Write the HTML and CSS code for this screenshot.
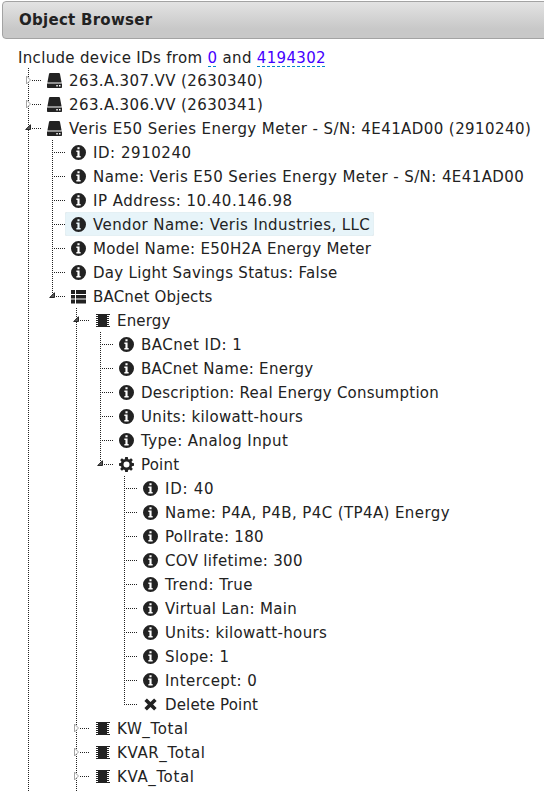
FILE: index.html
```html
<!DOCTYPE html>
<html lang="en">
<head>
<meta charset="utf-8">
<title>Object Browser</title>
<link rel="stylesheet" href="styles.css">
</head>
<body>
<svg class="defs" aria-hidden="true">
  <symbol id="drive" viewBox="0 0 15 15"><path d="M3 0h9q.8 0 1 .9L14.600 9.500H.4L2 .9Q2.200 0 3 0zM0 10.500h15v3.700q0 .8-.8.800H.8q-.8 0-.8-.8zM9.300 12v1.500h1.500V12zm2.700 0v1.500h1.500V12z" fill-rule="evenodd"/></symbol>
  <symbol id="info" viewBox="0 0 14 14"><path d="M7 0a7 7 0 1 1 0 14A7 7 0 0 1 7 0zM6 2v2h2V2zM5 5.200v1.300h1v3.800H5v1.300h4v-1.300H8V5.200z" fill-rule="evenodd"/></symbol>
  <symbol id="list" viewBox="0 0 15 15"><path d="M0 1h4v4H0zM5 1h10v4H5zM0 6h4v3.500H0zM5 6h10v3.500H5zM0 10.500h4v4H0zM5 10.500h10v4H5z"/></symbol>
  <symbol id="chip" viewBox="0 0 15 15"><path d="M3 1h9v13H3zM1 1h2v1H1zM1 3h2v1H1zM1 5h2v1H1zM1 7h2v1H1zM1 9h2v1H1zM1 11h2v1H1zM1 13h2v1H1zM12 1h3v1h-3zM12 3h2v1h-2zM12 5h2v1h-2zM12 7h2v1h-2zM12 9h2v1h-2zM12 11h2v1h-2zM12 13h3v1h-3z"/></symbol>
  <symbol id="gear" viewBox="0 0 14 14"><path d="M5.800 0h2.400l.4 2 1 .4L11.300 1.200 12.900 2.800 11.700 4.400l.4 1 1.900.4v2.400l-1.900.4-.4 1 1.200 1.600-1.600 1.600-1.700-1.100-1 .4-.4 1.900H5.800l-.4-1.900-1-.4-1.700 1.100-1.600-1.600 1.200-1.600-.4-1L0 8.200V5.800l1.900-.4.4-1L1.100 2.800l1.600-1.600 1.700 1.200 1-.4zM7 4.200a2.800 2.800 0 1 0 0 5.600 2.800 2.800 0 0 0 0-5.600z" fill-rule="evenodd"/></symbol>
  <symbol id="cross" viewBox="0 0 15 15"><path d="M3.900 1.500 7.500 5l3.600-3.500 2.500 2.500L10.100 7.600l3.500 3.500-2.500 2.500-3.600-3.500-3.600 3.500-2.500-2.500 3.500-3.500L1.400 4z"/></symbol>
  <symbol id="right" viewBox="0 0 6 10"><path d="M.5 1v8L4.500 5z" fill="#fff" stroke="#a6a6a6"/></symbol>
  <symbol id="down" viewBox="0 0 6 6"><path d="M5.500.7v4.800H.7z" fill="#595959" stroke="#262626"/></symbol>
</svg>
<header class="titlebar">Object Browser</header>
<main class="browser">
  <p class="range">Include device IDs from <a>0</a> and <a>4194302</a></p>
  <ul class="tree">
    <li class="parent"><svg class="arrow closed"><use href="#right"/></svg><span class="row s40"><svg><use href="#drive"/></svg>263.A.307.VV (2630340)</span></li>
    <li class="parent"><svg class="arrow closed"><use href="#right"/></svg><span class="row s40"><svg><use href="#drive"/></svg>263.A.306.VV (2630341)</span></li>
    <li class="parent more"><svg class="arrow"><use href="#down"/></svg><span class="row s42"><svg><use href="#drive"/></svg>Veris E50 Series Energy Meter - S/N: 4E41AD00 (2910240)</span>
      <ul>
        <li><span class="row s55"><svg><use href="#info"/></svg>ID: 2910240</span></li>
        <li><span class="row s42"><svg><use href="#info"/></svg>Name: Veris E50 Series Energy Meter - S/N: 4E41AD00</span></li>
        <li><span class="row s48"><svg><use href="#info"/></svg>IP Address: 10.40.146.98</span></li>
        <li><span class="row s40 hovered"><svg><use href="#info"/></svg>Vendor Name: Veris Industries, LLC</span></li>
        <li><span class="row s30"><svg><use href="#info"/></svg>Model Name: E50H2A Energy Meter</span></li>
        <li><span class="row s30"><svg><use href="#info"/></svg>Day Light Savings Status: False</span></li>
        <li class="parent"><svg class="arrow"><use href="#down"/></svg><span class="row s20"><svg><use href="#list"/></svg>BACnet Objects</span>
          <ul>
            <li class="parent"><svg class="arrow"><use href="#down"/></svg><span class="row s15"><svg><use href="#chip"/></svg>Energy</span>
              <ul>
                <li><span class="row s48"><svg><use href="#info"/></svg>BACnet ID: 1</span></li>
                <li><span class="row s30"><svg><use href="#info"/></svg>BACnet Name: Energy</span></li>
                <li><span class="row s25"><svg><use href="#info"/></svg>Description: Real Energy Consumption</span></li>
                <li><span class="row s33"><svg><use href="#info"/></svg>Units: kilowatt-hours</span></li>
                <li><span class="row s42"><svg><use href="#info"/></svg>Type: Analog Input</span></li>
                <li class="parent"><svg class="arrow"><use href="#down"/></svg><span class="row s20"><svg><use href="#gear"/></svg>Point</span>
                  <ul>
                    <li><span class="row s75"><svg><use href="#info"/></svg>ID: 40</span></li>
                    <li><span class="row s40"><svg><use href="#info"/></svg>Name: P4A, P4B, P4C (TP4A) Energy</span></li>
                    <li><span class="row s30"><svg><use href="#info"/></svg>Pollrate: 180</span></li>
                    <li><span class="row s33"><svg><use href="#info"/></svg>COV lifetime: 300</span></li>
                    <li><span class="row s48"><svg><use href="#info"/></svg>Trend: True</span></li>
                    <li><span class="row s33"><svg><use href="#info"/></svg>Virtual Lan: Main</span></li>
                    <li><span class="row s33"><svg><use href="#info"/></svg>Units: kilowatt-hours</span></li>
                    <li><span class="row s42"><svg><use href="#info"/></svg>Slope: 1</span></li>
                    <li><span class="row s42"><svg><use href="#info"/></svg>Intercept: 0</span></li>
                    <li><span class="row s15"><svg><use href="#cross"/></svg>Delete Point</span></li>
                  </ul>
                </li>
              </ul>
            </li>
            <li class="parent"><svg class="arrow closed"><use href="#right"/></svg><span class="row s62"><svg><use href="#chip"/></svg>KW_Total</span></li>
            <li class="parent"><svg class="arrow closed"><use href="#right"/></svg><span class="row s62"><svg><use href="#chip"/></svg>KVAR_Total</span></li>
            <li class="parent more last"><svg class="arrow closed"><use href="#right"/></svg><span class="row s62"><svg><use href="#chip"/></svg>KVA_Total</span></li>
          </ul>
        </li>
      </ul>
    </li>
  </ul>
</main>
</body>
</html>
```

FILE: styles.css
```css
* { box-sizing: border-box; }
html { overflow: hidden; background: #fff; }
body {
  margin: 0;
  height: 792px;
  overflow: hidden;
  color: #222;
  font: 15px/24px "DejaVu Sans", sans-serif;
}
.defs { position: absolute; width: 0; height: 0; }
.titlebar {
  margin: 1px 0 0 2px;
  width: 560px;
  height: 38px;
  padding: 0 15px 0 16px;
  border: 1px solid #a3a3a3;
  border-radius: 4px;
  background: linear-gradient(#e3e3e3, #c8c8c8 75%);
  font-weight: bold;
  letter-spacing: .27px;
  line-height: 36px;
}
.browser { padding-left: 17px; white-space: nowrap; }
.range { margin: 7px 0 0 1px; height: 22px; letter-spacing: .33px; }
.range a {
  color: #40f;
  background: repeating-linear-gradient(90deg, #08c 0 3px, transparent 3px 5px) left bottom / 100% 1px no-repeat;
}
ul { list-style: none; margin: 0; padding: 0; }
li { position: relative; padding-left: 24px; }
.last { padding-bottom: 8px; }
/* vertical guide */
li::before {
  content: "";
  position: absolute;
  left: 11px;
  top: 0;
  bottom: 0;
  width: 1px;
  background: repeating-linear-gradient(#222 0 1px, transparent 1px 2px);
}
li:last-child:not(.more)::before { bottom: auto; height: 13px; }
/* horizontal guide */
li::after {
  content: "";
  position: absolute;
  left: 13px;
  top: 12px;
  width: 11px;
  height: 1px;
  background: repeating-linear-gradient(90deg, #222 0 1px, transparent 1px 2px);
}
.parent::after { left: 15px; width: 9px; }
.arrow { position: absolute; left: 8px; top: 8px; width: 6px; height: 6px; }
.arrow.closed { left: 9px; top: 7px; height: 10px; }
.row {
  display: inline-flex;
  align-items: flex-start;
  height: 24px;
  line-height: 26px;
  padding: 0 4px 0 6px;
  vertical-align: top;
}
.row svg { width: 15px; height: 15px; margin: 5px 7px 0 0; fill: #222; }
.hovered { background: #e7f4f9; border-radius: 2px; box-shadow: inset 0 0 1px #ccc; }
/* tracking steps */
.s15 { letter-spacing: .15px; }
.s20 { letter-spacing: .2px; }
.s25 { letter-spacing: .25px; }
.s30 { letter-spacing: .3px; }
.s33 { letter-spacing: .33px; }
.s40 { letter-spacing: .4px; }
.s42 { letter-spacing: .42px; }
.s48 { letter-spacing: .48px; }
.s55 { letter-spacing: .55px; }
.s62 { letter-spacing: .62px; }
.s75 { letter-spacing: .75px; }
```
